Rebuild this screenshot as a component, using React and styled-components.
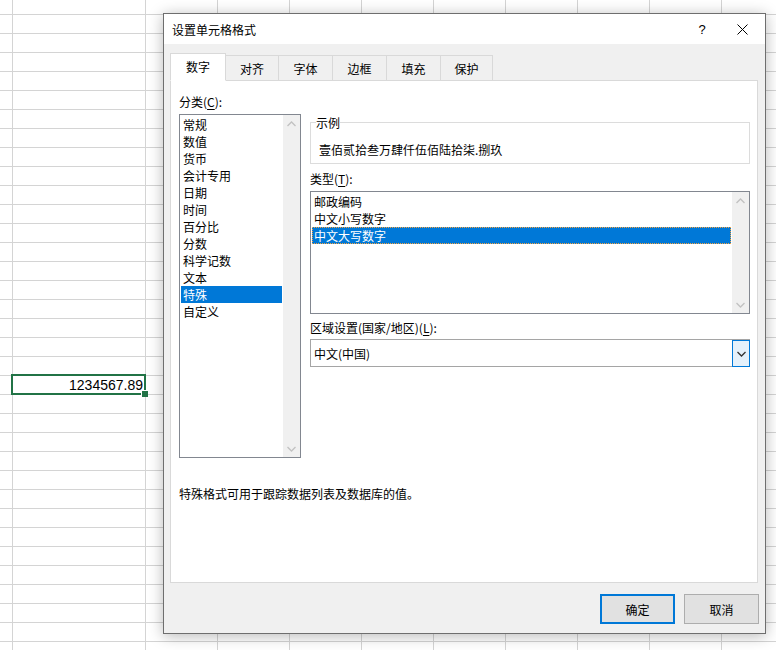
import React from "react";
import styled, { createGlobalStyle } from "styled-components";

const Global = createGlobalStyle`
  html, body { margin: 0; padding: 0; background: #fff; overflow: hidden; }
  body { font-family: "Noto Sans CJK SC", "Microsoft YaHei", sans-serif; font-size: 12px; line-height: 17px; color: #000; }
  * { box-sizing: border-box; }
`;

const Screen = styled.div`
  position: relative;
  width: 776px;
  height: 650px;
  overflow: hidden;
`;

const Sheet = styled.div`
  display: grid;
  grid-template-columns: 13px 133px repeat(9, 72px);
  grid-template-rows: 15px;
  grid-auto-rows: 19px;
  width: 776px;
  height: 650px;
  overflow: hidden;
  background: #fff;
`;

const Cell = styled.div`
  position: relative;
  z-index: ${(p) => (p.$active ? 2 : "auto")};
  border-right: 1px solid #d4d4d4;
  border-bottom: 1px solid #d4d4d4;
  display: flex;
  align-items: center;
  justify-content: flex-end;
  padding-right: 2px;
  font-family: "Liberation Sans", Arial, sans-serif;
  font-size: 14px;
  color: #000;
`;

const Selection = styled.div`
  position: absolute;
  top: -2px;
  bottom: -1px;
  left: -2px;
  right: -1px;
  border: 2px solid #217346;
  pointer-events: none;
`;

const FillHandle = styled.div`
  position: absolute;
  right: -4px;
  bottom: -4px;
  width: 6px;
  height: 6px;
  background: #217346;
  box-shadow: -1px -1px 0 #fff;
`;

const Dialog = styled.div`
  position: absolute;
  left: 163px;
  top: 13px;
  width: 603px;
  height: 621px;
  z-index: 5;
  border: 1px solid #6e6e6e;
  background: #f0f0f0;
  box-shadow: 0 2px 14px rgba(0, 0, 0, 0.28);
  display: flex;
  flex-direction: column;
`;

const TitleBar = styled.div`
  height: 30px;
  flex: none;
  background: #fff;
  display: flex;
  align-items: center;
  padding-left: 8px;
`;

const Title = styled.div`
  flex: 1;
`;

const TitleButton = styled.div`
  width: ${(p) => p.$w}px;
  height: 30px;
  display: flex;
  align-items: center;
  justify-content: center;
  font-family: "Liberation Sans", Arial, sans-serif;
  font-size: 13px;
  color: #000;
`;

const Body = styled.div`
  flex: 1;
  padding: 9px 7px 9px 6px;
  display: flex;
  flex-direction: column;
`;

const TabStrip = styled.div`
  height: 28px;
  display: flex;
  align-items: flex-end;
  margin-bottom: -1px;
  position: relative;
  z-index: 1;
`;

const Tab = styled.div`
  width: ${(p) => p.$w}px;
  height: ${(p) => (p.$active ? 28 : 26)}px;
  margin-left: ${(p) => (p.$first ? 0 : -1)}px;
  padding-bottom: ${(p) => (p.$active ? 2 : 0)}px;
  border: 1px solid #d9d9d9;
  border-bottom-color: ${(p) => (p.$active ? "#fff" : "#d9d9d9")};
  background: ${(p) => (p.$active ? "#fff" : "#f0f0f0")};
  display: flex;
  align-items: center;
  justify-content: center;
  position: relative;
  z-index: ${(p) => (p.$active ? 2 : 1)};
`;

const Panel = styled.div`
  height: 503px;
  flex: none;
  background: #fff;
  border: 1px solid #d9d9d9;
  padding: 12px 7px 0 8px;
`;

const TopRow = styled.div`
  display: flex;
  align-items: flex-start;
  gap: 9px;
`;

const LeftCol = styled.div`
  width: 122px;
  flex: none;
  display: flex;
  flex-direction: column;
`;

const RightCol = styled.div`
  flex: 1;
  display: flex;
  flex-direction: column;
  padding-top: 21px;
`;

const Label = styled.div`
  height: 17px;
  margin-top: ${(p) => p.$mt || 0}px;
  white-space: nowrap;
`;

const Key = styled.span`
  text-decoration: underline;
  text-underline-offset: 2px;
`;

const ListBox = styled.div`
  height: ${(p) => p.$h}px;
  margin-top: 4px;
  border: 1px solid #828790;
  background: #fff;
  display: flex;
`;

const Items = styled.div`
  flex: 1;
  padding: 1px;
  display: flex;
  flex-direction: column;
`;

const Item = styled.div`
  height: 17px;
  flex: none;
  padding-left: 2px;
  white-space: nowrap;
  background: ${(p) => (p.$sel ? "#0078d7" : "transparent")};
  color: ${(p) => (p.$sel ? "#fff" : "#000")};
  outline: ${(p) => (p.$focus ? "1px dotted #f4a340" : "none")};
  outline-offset: -1px;
`;

const ScrollBar = styled.div`
  width: 17px;
  flex: none;
  background: #f0f0f0;
  display: flex;
  flex-direction: column;
  justify-content: space-between;
  align-items: center;
`;

const ArrowBox = styled.div`
  height: 17px;
  width: 17px;
  display: flex;
  align-items: center;
  justify-content: center;
`;

const Fieldset = styled.fieldset`
  margin: 0;
  padding: 10px 0 5px 5px;
  border: 1px solid #dcdcdc;
  min-width: 0;
`;

const Legend = styled.legend`
  padding: 0;
  font-size: 12px;
  line-height: 17px;
`;

const Sample = styled.div`
  margin-left: 3px;
  height: 17px;
  white-space: nowrap;
`;

const Combo = styled.div`
  height: 28px;
  margin-top: 3px;
  border: 1px solid #a5a5a5;
  background: #fff;
  display: flex;
  align-items: stretch;
`;

const ComboText = styled.div`
  flex: 1;
  padding-left: 3px;
  display: flex;
  align-items: center;
`;

const ComboButton = styled.div`
  width: 18px;
  margin: 0 -1px -1px 0;
  border: 1px solid #0078d7;
  background: #e5f1fb;
  display: flex;
  align-items: center;
  justify-content: center;
`;

const Description = styled.div`
  margin-top: 27px;
  height: 17px;
`;

const ButtonRow = styled.div`
  margin-top: 11px;
  margin-right: -1px;
  display: flex;
  justify-content: flex-end;
  gap: 9px;
`;

const Button = styled.div`
  width: 75px;
  height: 30px;
  background: #e1e1e1;
  border: ${(p) => (p.$primary ? "2px solid #0078d7" : "1px solid #adadad")};
  display: flex;
  align-items: center;
  justify-content: center;
`;

const Chevron = ({ up, color = "#c2c2c2" }) => (
  <svg width="9" height="6" viewBox="0 0 9 6">
    <polyline
      points={up ? "0.5,5 4.5,1 8.5,5" : "0.5,1 4.5,5 8.5,1"}
      fill="none"
      stroke={color}
      strokeWidth="1.3"
    />
  </svg>
);

const Scroll = () => (
  <ScrollBar>
    <ArrowBox>
      <Chevron up />
    </ArrowBox>
    <ArrowBox>
      <Chevron />
    </ArrowBox>
  </ScrollBar>
);

const categories = [
  "常规",
  "数值",
  "货币",
  "会计专用",
  "日期",
  "时间",
  "百分比",
  "分数",
  "科学记数",
  "文本",
  "特殊",
  "自定义",
];

const types = ["邮政编码", "中文小写数字", "中文大写数字"];

const tabs = [
  ["数字", 56],
  ["对齐", 54],
  ["字体", 55],
  ["边框", 55],
  ["填充", 55],
  ["保护", 53],
];

const ROWS = 35;
const COLS = 11;

export default function App() {
  const cells = [];
  for (let r = 0; r < ROWS; r++) {
    for (let c = 0; c < COLS; c++) {
      const selected = r === 20 && c === 1;
      cells.push(
        <Cell key={`${r}-${c}`} $active={selected}>
          {selected && (
            <>
              1234567.89
              <Selection>
                <FillHandle />
              </Selection>
            </>
          )}
        </Cell>
      );
    }
  }

  return (
    <Screen>
      <Global />
      <Sheet>{cells}</Sheet>
      <Dialog>
        <TitleBar>
          <Title>设置单元格格式</Title>
          <TitleButton $w={34}>?</TitleButton>
          <TitleButton $w={46}>
            <svg width="11" height="11" viewBox="0 0 11 11">
              <path d="M0.5 0.5 L10.5 10.5 M10.5 0.5 L0.5 10.5" stroke="#000" strokeWidth="1" fill="none" />
            </svg>
          </TitleButton>
        </TitleBar>
        <Body>
          <TabStrip>
            {tabs.map(([t, w], i) => (
              <Tab key={t} $w={w} $active={i === 0} $first={i === 0}>
                {t}
              </Tab>
            ))}
          </TabStrip>
          <Panel>
            <TopRow>
              <LeftCol>
                <Label>
                  分类(<Key>C</Key>):
                </Label>
                <ListBox $h={344}>
                  <Items>
                    {categories.map((c) => (
                      <Item key={c} $sel={c === "特殊"}>
                        {c}
                      </Item>
                    ))}
                  </Items>
                  <Scroll />
                </ListBox>
              </LeftCol>
              <RightCol>
                <Fieldset>
                  <Legend>示例</Legend>
                  <Sample>壹佰贰拾叁万肆仟伍佰陆拾柒.捌玖</Sample>
                </Fieldset>
                <Label $mt={6}>
                  类型(<Key>T</Key>):
                </Label>
                <ListBox $h={123}>
                  <Items>
                    {types.map((t, i) => (
                      <Item key={t} $sel={i === 2} $focus={i === 2}>
                        {t}
                      </Item>
                    ))}
                  </Items>
                  <Scroll />
                </ListBox>
                <Label $mt={5}>
                  区域设置(国家/地区)(<Key>L</Key>):
                </Label>
                <Combo>
                  <ComboText>中文(中国)</ComboText>
                  <ComboButton>
                    <Chevron color="#333" />
                  </ComboButton>
                </Combo>
              </RightCol>
            </TopRow>
            <Description>特殊格式可用于跟踪数据列表及数据库的值。</Description>
          </Panel>
          <ButtonRow>
            <Button $primary>确定</Button>
            <Button>取消</Button>
          </ButtonRow>
        </Body>
      </Dialog>
    </Screen>
  );
}
